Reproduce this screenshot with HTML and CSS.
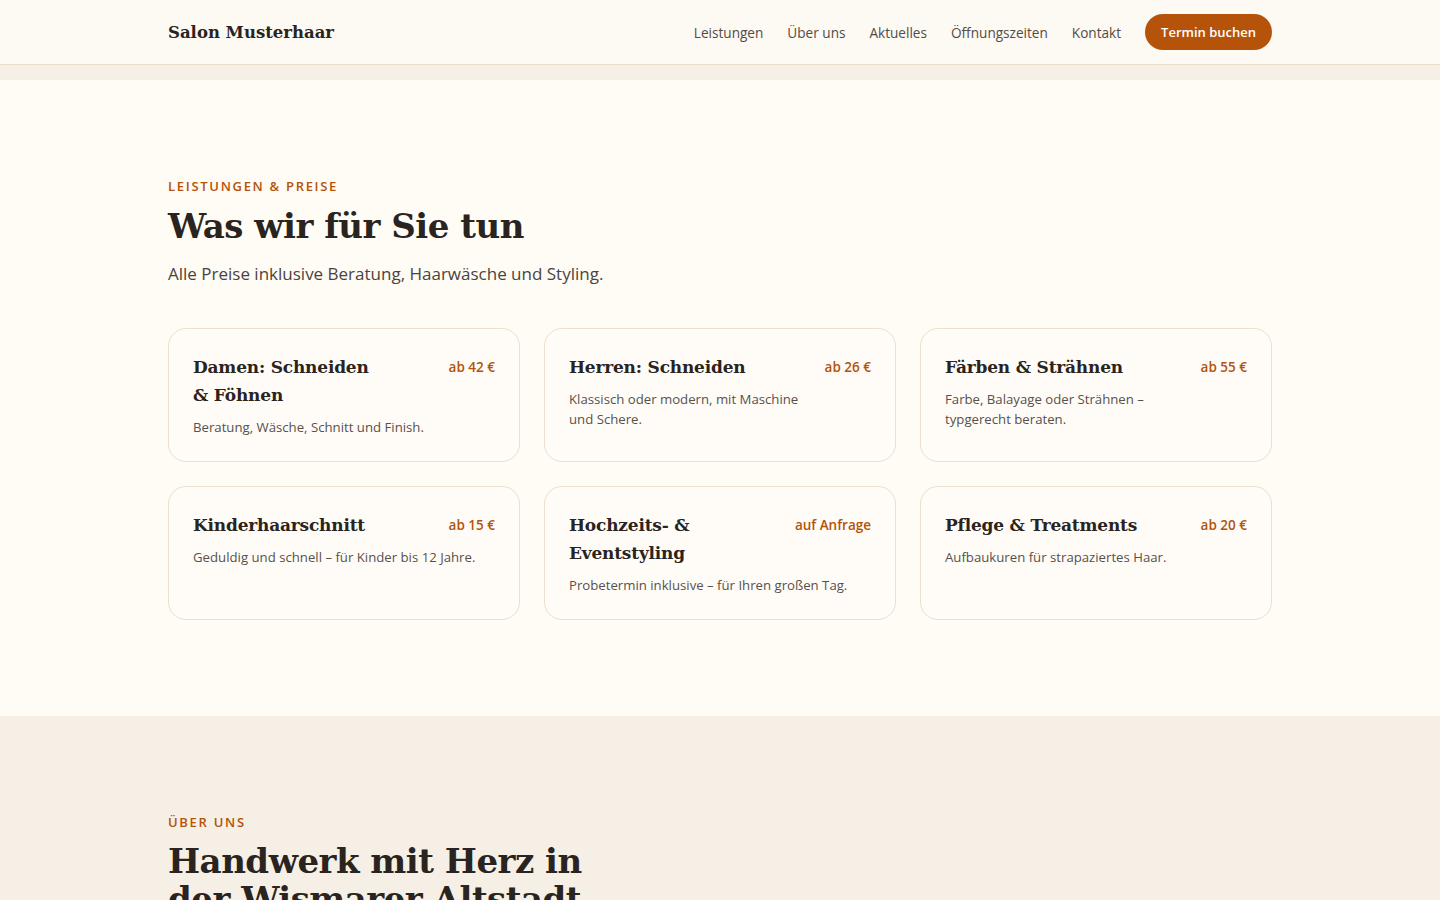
FILE: index.html
```html
<!DOCTYPE html>
<html lang="de">
<head>
    <meta charset="UTF-8">
    <meta name="viewport" content="width=device-width, initial-scale=1.0">
    <title>Salon Musterhaar</title>
    <link rel="stylesheet" href="styles.css">
</head>
<body>
    <header class="topbar">
        <div class="wrap topbar-inner">
            <a class="brand" href="#">Salon Musterhaar</a>
            <nav class="mainnav">
                <a href="#leistungen">Leistungen</a>
                <a href="#ueber">Über uns</a>
                <a href="#">Aktuelles</a>
                <a href="#">Öffnungszeiten</a>
                <a href="#">Kontakt</a>
                <a class="btn-book" href="#">Termin buchen</a>
            </nav>
        </div>
    </header>
    <div class="hero-tail"></div>

    <!-- Leistungen -->
    <section class="services" id="leistungen">
        <div class="wrap">
            <p class="eyebrow">Leistungen &amp; Preise</p>
            <h2 class="section-title">Was wir für Sie tun</h2>
            <p class="lead">Alle Preise inklusive Beratung, Haarwäsche und Styling.</p>

            <div class="card-grid">
                <div class="card">
                    <div class="card-head">
                        <h3>Damen: Schneiden &amp; Föhnen</h3>
                        <span class="price">ab 42 €</span>
                    </div>
                    <p>Beratung, Wäsche, Schnitt und Finish.</p>
                </div>
                <div class="card">
                    <div class="card-head">
                        <h3>Herren: Schneiden</h3>
                        <span class="price">ab 26 €</span>
                    </div>
                    <p>Klassisch oder modern, mit Maschine und Schere.</p>
                </div>
                <div class="card">
                    <div class="card-head">
                        <h3>Färben &amp; Strähnen</h3>
                        <span class="price">ab 55 €</span>
                    </div>
                    <p>Farbe, Balayage oder Strähnen – typgerecht beraten.</p>
                </div>
                <div class="card">
                    <div class="card-head">
                        <h3>Kinderhaarschnitt</h3>
                        <span class="price">ab 15 €</span>
                    </div>
                    <p>Geduldig und schnell – für Kinder bis 12 Jahre.</p>
                </div>
                <div class="card">
                    <div class="card-head">
                        <h3>Hochzeits- &amp; Eventstyling</h3>
                        <span class="price">auf Anfrage</span>
                    </div>
                    <p>Probetermin inklusive – für Ihren großen Tag.</p>
                </div>
                <div class="card">
                    <div class="card-head">
                        <h3>Pflege &amp; Treatments</h3>
                        <span class="price">ab 20 €</span>
                    </div>
                    <p>Aufbaukuren für strapaziertes Haar.</p>
                </div>
            </div>
        </div>
    </section>

    <!-- Über uns -->
    <section class="about" id="ueber">
        <div class="wrap about-grid">
            <div class="about-text">
                <p class="eyebrow">Über uns</p>
                <h2 class="section-title about-title">Handwerk mit Herz in der Wismarer Altstadt</h2>
            </div>
            <div class="about-side"></div>
        </div>
    </section>
</body>
</html>
```

FILE: styles.css
```css
*{
    margin: 0;
    padding: 0;
    box-sizing: border-box;
}
body{
    background-color: #fffbf5;
    color: #292420;
    font-family: "Open Sans", "Noto Sans", sans-serif;
}
a{
    color: inherit;
    text-decoration: none;
}
.wrap{
    width: 1104px;
    margin: 0 auto;
}

/* Kopfzeile */
.topbar{
    background-color: #fdf9f3;
    border-bottom: 1px solid #e9dccb;
}
.topbar-inner{
    height: 64px;
    display: flex;
    align-items: center;
    justify-content: space-between;
}
.brand{
    font-family: "DejaVu Serif", serif;
    font-weight: bold;
    font-size: 16.5px;
    color: #2a2420;
}
.mainnav{
    display: flex;
    align-items: center;
    gap: 24px;
    font-size: 13.6px;
    color: #524c46;
}
.btn-book{
    background-color: #b45309;
    color: #fff;
    font-size: 13px;
    font-weight: 600;
    height: 36px;
    padding: 0 16px;
    border-radius: 18px;
    display: flex;
    align-items: center;
}
.hero-tail{
    height: 15px;
    background-color: #f5efe6;
}

/* Abschnitte */
.services{
    padding: 96px 0;
}
.eyebrow{
    font-size: 13px;
    line-height: 20px;
    font-weight: 600;
    letter-spacing: 1.7px;
    text-transform: uppercase;
    color: #b45309;
}
.section-title{
    font-family: "DejaVu Serif", serif;
    font-size: 34px;
    line-height: 44px;
    letter-spacing: -0.5px;
    font-weight: bold;
    color: #2a2420;
    margin-top: 8px;
    text-wrap: balance;
}
.lead{
    font-size: 17px;
    line-height: 28px;
    color: #4a443f;
    margin-top: 12px;
}
.card-grid{
    display: grid;
    grid-template-columns: repeat(3, 1fr);
    gap: 24px;
    margin-top: 40px;
}
.card{
    border: 1px solid #ebdfcf;
    border-radius: 18px;
    background-color: #fffcf8;
    padding: 24px;
}
.card-head{
    display: flex;
    justify-content: space-between;
    align-items: flex-start;
    gap: 16px;
}
.card h3{
    font-family: "DejaVu Serif", serif;
    font-size: 17px;
    line-height: 28px;
    letter-spacing: -0.2px;
    font-weight: bold;
    color: #2a2420;
    text-wrap: balance;
}
.price{
    font-size: 13.5px;
    line-height: 28px;
    font-weight: 600;
    color: #b45309;
    white-space: nowrap;
}
.card p{
    font-size: 13.2px;
    line-height: 20px;
    color: #57514b;
    margin-top: 8px;
    text-wrap: pretty;
}
.about{
    background-color: #f5efe6;
    padding: 96px 0;
}
.about-grid{
    display: grid;
    grid-template-columns: 1fr 1fr;
    gap: 48px;
}
.about-title{
    line-height: 38px;
    margin-top: 10px;
}
```
